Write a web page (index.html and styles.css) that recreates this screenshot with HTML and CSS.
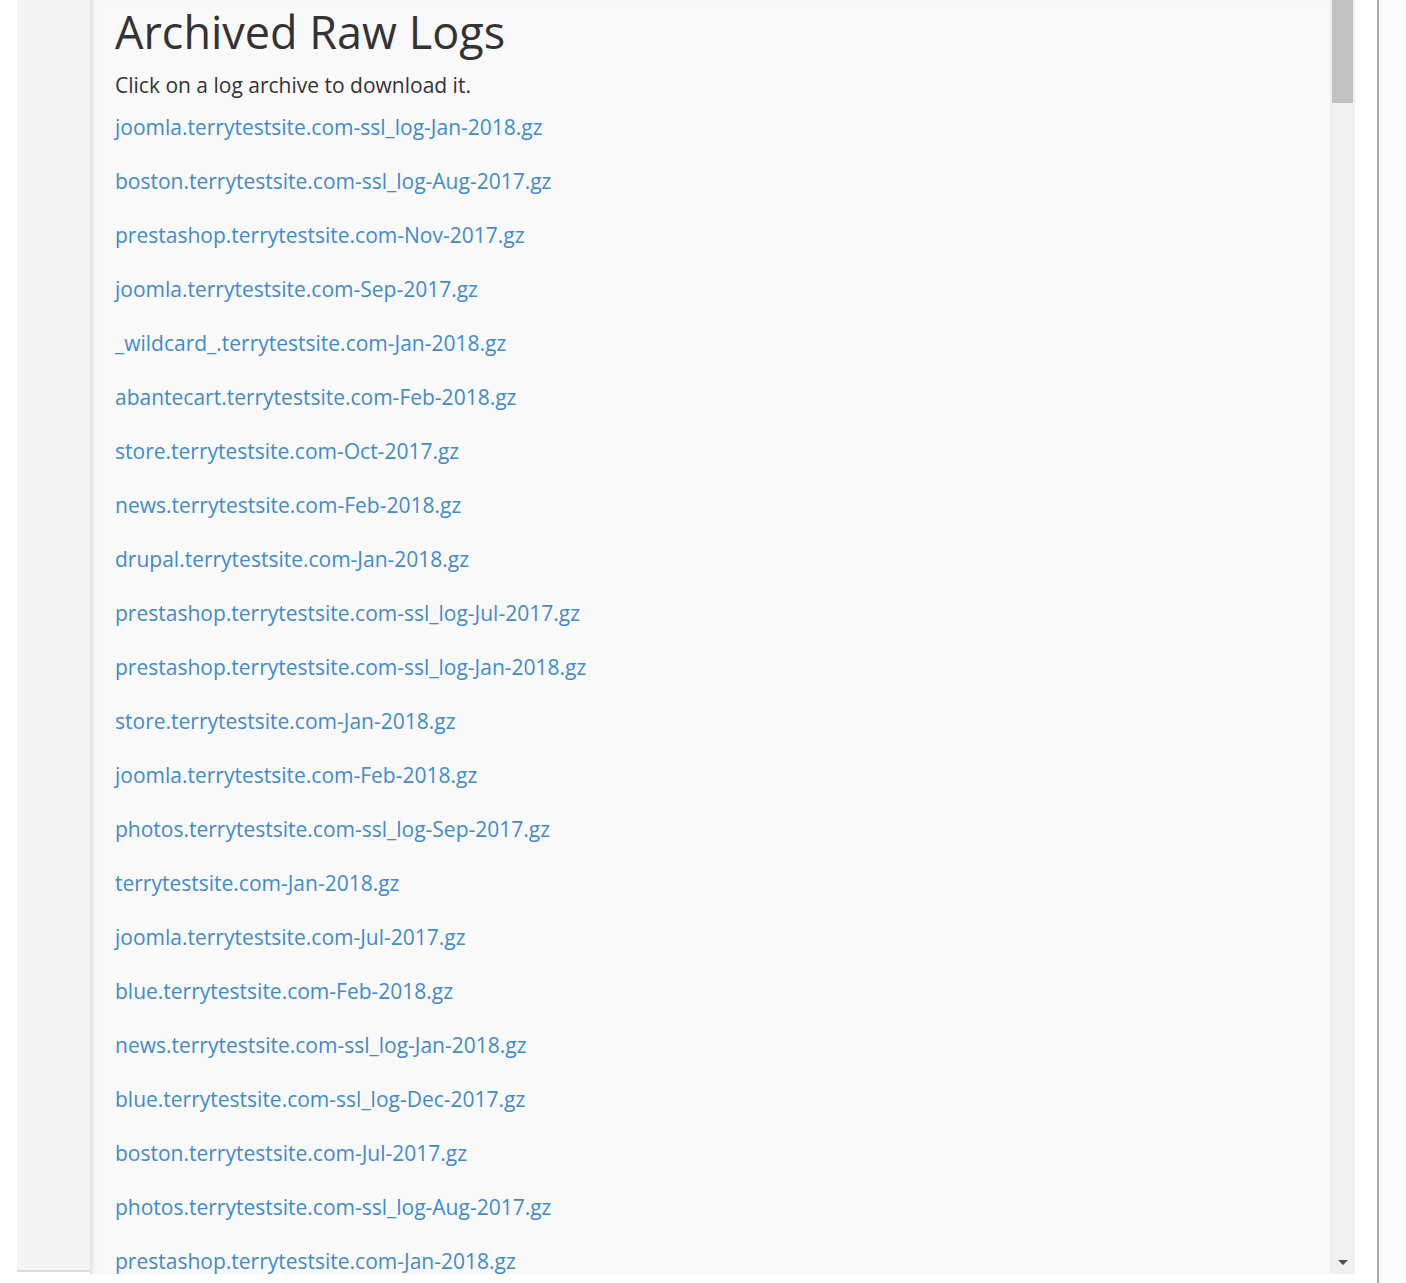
FILE: index.html
```html
<!DOCTYPE html>
<html lang="en">
<head>
<meta charset="utf-8">
<title>Archived Raw Logs</title>
<link rel="stylesheet" href="styles.css">
</head>
<body>
<div class="frame">
  <div class="side"></div>
  <div class="main">
    <div class="content">
      <h1 class="title">Archived Raw Logs</h1>
      <p class="lead">Click on a log archive to download it.</p>
      <ul class="logs">
        <li><a href="#">joomla.terrytestsite.com-ssl_log-Jan-2018.gz</a></li>
        <li><a href="#">boston.terrytestsite.com-ssl_log-Aug-2017.gz</a></li>
        <li><a href="#">prestashop.terrytestsite.com-Nov-2017.gz</a></li>
        <li><a href="#">joomla.terrytestsite.com-Sep-2017.gz</a></li>
        <li><a href="#">_wildcard_.terrytestsite.com-Jan-2018.gz</a></li>
        <li><a href="#">abantecart.terrytestsite.com-Feb-2018.gz</a></li>
        <li><a href="#">store.terrytestsite.com-Oct-2017.gz</a></li>
        <li><a href="#">news.terrytestsite.com-Feb-2018.gz</a></li>
        <li><a href="#">drupal.terrytestsite.com-Jan-2018.gz</a></li>
        <li><a href="#">prestashop.terrytestsite.com-ssl_log-Jul-2017.gz</a></li>
        <li><a href="#">prestashop.terrytestsite.com-ssl_log-Jan-2018.gz</a></li>
        <li><a href="#">store.terrytestsite.com-Jan-2018.gz</a></li>
        <li><a href="#">joomla.terrytestsite.com-Feb-2018.gz</a></li>
        <li><a href="#">photos.terrytestsite.com-ssl_log-Sep-2017.gz</a></li>
        <li><a href="#">terrytestsite.com-Jan-2018.gz</a></li>
        <li><a href="#">joomla.terrytestsite.com-Jul-2017.gz</a></li>
        <li><a href="#">blue.terrytestsite.com-Feb-2018.gz</a></li>
        <li><a href="#">news.terrytestsite.com-ssl_log-Jan-2018.gz</a></li>
        <li><a href="#">blue.terrytestsite.com-ssl_log-Dec-2017.gz</a></li>
        <li><a href="#">boston.terrytestsite.com-Jul-2017.gz</a></li>
        <li><a href="#">photos.terrytestsite.com-ssl_log-Aug-2017.gz</a></li>
        <li><a href="#">prestashop.terrytestsite.com-Jan-2018.gz</a></li>
      </ul>
    </div>
    <div class="scrollbar">
      <div class="thumb"></div>
      <div class="track-fill"></div>
      <div class="arrow"></div>
    </div>
  </div>
  <div class="gap"></div>
  <div class="divider"></div>
  <div class="rest"></div>
</div>
</body>
</html>
```

FILE: styles.css
```css
html, body {
  margin: 0;
  padding: 0;
  background: #ffffff;
  height: 1283px;
  overflow: hidden;
}
.frame {
  display: flex;
  align-items: flex-start;
  height: 1283px;
  font-family: "Open Sans", "Liberation Sans", sans-serif;
}
.side {
  margin-left: 17px;
  width: 73px;
  height: 1270px;
  background: #f4f4f4;
  border-bottom: 2px solid #dcdcdc;
  flex: none;
}
.main {
  display: flex;
  width: 1265px;
  height: 1274px;
  flex: none;
}
.content {
  flex: 1;
  height: 1274px;
  overflow: hidden;
  background: #f9f9f9;
  box-shadow: inset 5px 0 5px -3px rgba(0, 0, 0, 0.12);
  padding-left: 25px;
  box-sizing: border-box;
}
.title {
  margin: 7px 0 0;
  font-size: 45px;
  font-weight: 400;
  line-height: 50px;
  color: #333333;
}
.lead {
  margin: 13px 0 0;
  font-size: 21px;
  line-height: 30px;
  color: #333333;
}
.logs {
  list-style: none;
  margin: 12px 0 0;
  padding: 0;
}
.logs li {
  height: 54px;
  font-size: 21px;
  line-height: 30px;
}
.logs a {
  color: #428bca;
  text-decoration: none;
}
.scrollbar {
  width: 25px;
  flex: none;
  display: flex;
  flex-direction: column;
  background: #f0f0f0;
  height: 1274px;
}
.thumb {
  margin: 0 2px;
  height: 103px;
  background: #c1c1c1;
}
.track-fill {
  flex: 1;
}
.arrow {
  align-self: center;
  width: 0;
  height: 0;
  border-left: 5px solid transparent;
  border-right: 5px solid transparent;
  border-top: 5px solid #505050;
  margin: 0 0 9px 1px;
}
.gap {
  width: 22px;
  flex: none;
}
.divider {
  width: 2px;
  height: 1283px;
  background: #aaaaaa;
  flex: none;
}
.rest {
  flex: 1;
  height: 1283px;
  background: #fbfbfb;
}
```
